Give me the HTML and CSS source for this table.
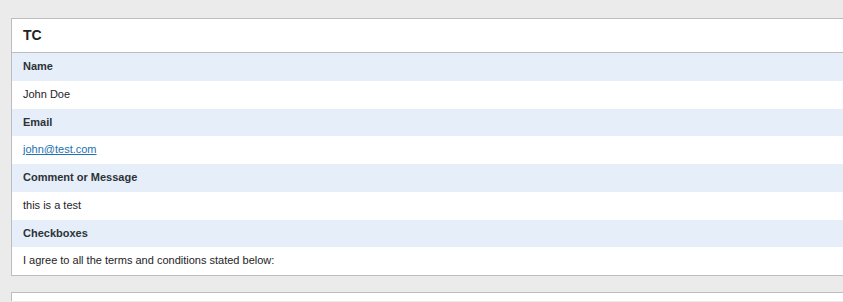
FILE: index.html
```html
<!DOCTYPE html>
<html lang="en">
<head>
    <meta charset="UTF-8">
    <meta name="viewport" content="width=device-width, initial-scale=1.0">
    <title>Entry Details</title>
    <link rel="stylesheet" href="styles.css">
</head>
<body>

<!-- 表單資料 -->
<div class="entry-box">
    <div class="entry-title">TC</div>
    <div class="field-label">Name</div>
    <div class="field-value">John Doe</div>
    <div class="field-label">Email</div>
    <div class="field-value"><a href="mailto:john@test.com">john@test.com</a></div>
    <div class="field-label">Comment or Message</div>
    <div class="field-value">this is a test</div>
    <div class="field-label">Checkboxes</div>
    <div class="field-value">I agree to all the terms and conditions stated below:</div>
</div>

<!-- 下一個區塊 -->
<div class="entry-box next-box"></div>

</body>
</html>
```

FILE: styles.css
```css
html, body {
    overflow: hidden;
}

body {
    font-family: "Liberation Sans", Arial, sans-serif;
    margin: 0;
    padding: 18px 0 0 11px;
    background-color: #ebebec;
    color: #1d2327;
}

.entry-box {
    background-color: white;
    border: 1px solid #bdbdc0;
    border-right: none; /* 右邊延伸到畫面外 */
    margin-bottom: 16px;
}

.next-box {
    height: 8px;
    border-bottom: none;
    margin-bottom: 0;
}

.entry-title {
    font-size: 14px;
    font-weight: bold;
    line-height: 17px;
    padding: 8px 11px;
    border-bottom: 1px solid #bdbdc0;
}

.field-label, .field-value {
    font-size: 11px;
    line-height: 13.75px;
    padding: 7px 11px;
}

.field-label {
    font-weight: bold;
    background-color: #e6eef9;
    color: #2c3338;
}

.field-value a {
    color: #2271b1;
}
```
